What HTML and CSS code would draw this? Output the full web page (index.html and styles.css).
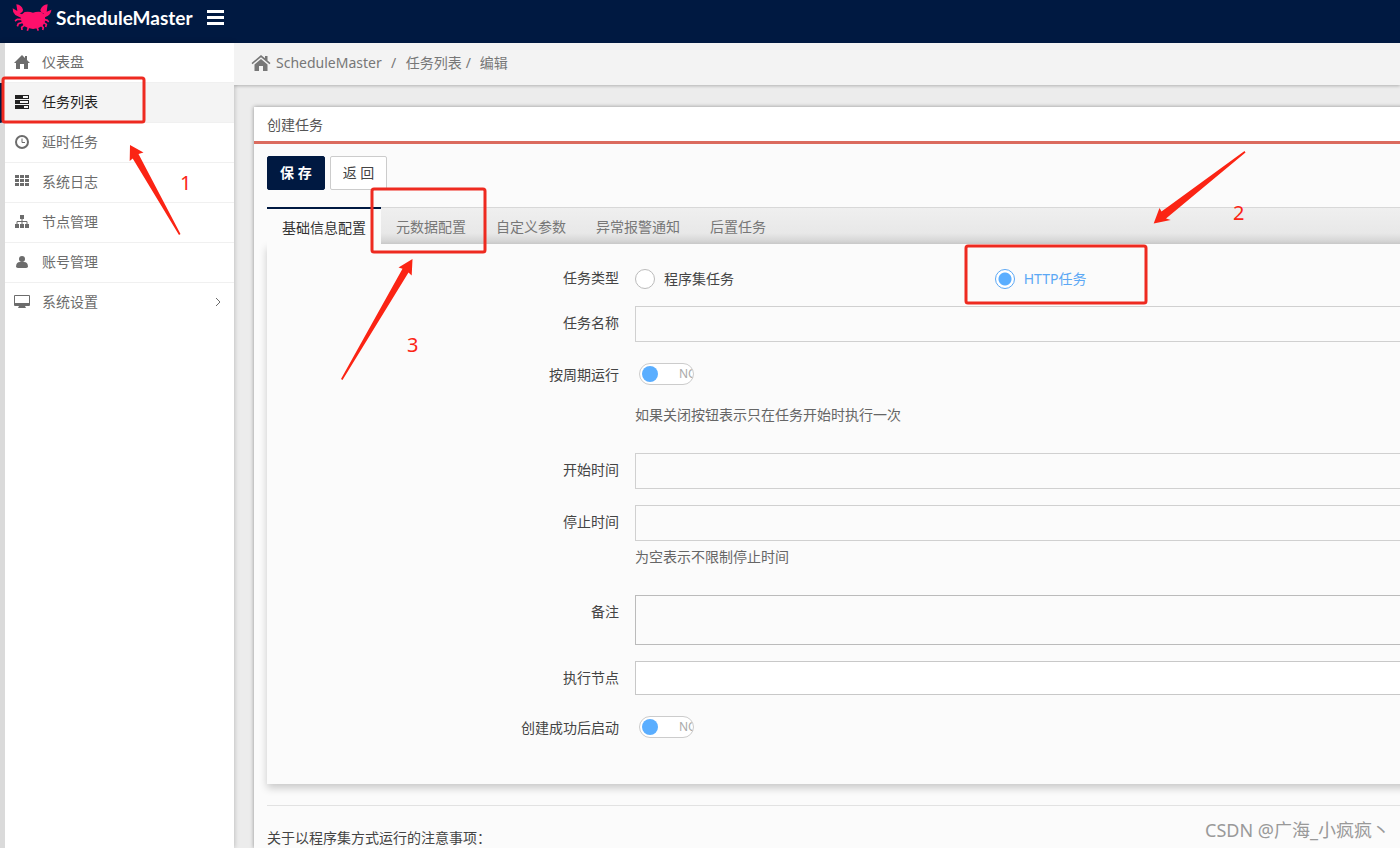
FILE: index.html
```html
<!DOCTYPE html>
<html lang="zh-CN">
<head>
<meta charset="utf-8">
<title>ScheduleMaster</title>
<link rel="stylesheet" href="styles.css">
</head>
<body>
<header class="topbar">
  <a class="brand" href="#">
    <svg class="crab" viewBox="34 6 120 88" aria-hidden="true">
      <path class="crab-fill" d="M62 40L72 32Q84 29 97 34Q110 29 122 32L131 40Q138 58 126 73Q98 92 70 74Q58 58 62 40Z"/>
      <path class="crab-fill" d="M62 50L44 41Q35 32 36 21L50 29L47 9Q63 11 67 25Q67 33 57 36L70 42Z"/>
      <path class="crab-fill" d="M130 49L142 43Q152 36 152 25L138 31L141 9Q124 11 119 26Q120 34 130 37L122 41Z"/>
      <path class="crab-leg" d="M66 54L50 54L43 59M68 62L53 67L50 75M74 70L63 78L64 86M84 76L80 88M128 54L140 57L144 62M126 62L137 69L135 77M120 70L128 79L126 86M108 76L113 88"/>
    </svg>
    <span>ScheduleMaster</span>
  </a>
  <button class="menu-btn" type="button" aria-label="菜单"><i></i><i></i><i></i></button>
</header>
<div class="layout">
  <nav class="sidebar">
    <a href="#"><svg viewBox="0 0 16 16"><path d="M8 1L0 9h2v6h4v-5h4v5h4V9h2l-3-3V2h-2v2z"/></svg><span>仪表盘</span></a>
    <a href="#" class="active"><svg viewBox="0 0 16 16"><path fill-rule="evenodd" d="M1 1h14v4H1zM9 2v2h5V2zM1 6h14v4H1zM6 7v2h8V7zM1 11h14v4H1zM10 12v2h4v-2z"/></svg><span>任务列表</span></a>
    <a href="#"><svg viewBox="0 0 16 16"><path fill="none" stroke="currentColor" stroke-width="2" d="M8 2a6 6 0 1 0 0 12A6 6 0 1 0 8 2z"/><path fill="none" stroke="currentColor" d="M8 4.500V8.500H11"/></svg><span>延时任务</span></a>
    <a href="#"><svg viewBox="0 0 16 16"><path d="M1 1h4v3H1zM6 1h4v3H6zM11 1h4v3h-4zM1 5h4v3H1zM6 5h4v3H6zM11 5h4v3h-4zM1 9h4v3H1zM6 9h4v3H6zM11 9h4v3h-4z"/></svg><span>系统日志</span></a>
    <a href="#"><svg viewBox="0 0 16 16"><path d="M6 1h4v4H6zM1 10h4v4H1zM6 10h4v4H6zM11 10h4v4h-4z"/><path fill="none" stroke="currentColor" d="M8 5v5M3 10V7.500h10V10"/></svg><span>节点管理</span></a>
    <a href="#"><svg viewBox="0 0 16 16"><circle cx="8" cy="5" r="3"/><path d="M2 13q0-5 4-5h4q4 0 4 5-1 1-2 1H4q-1 0-2-1z"/></svg><span>账号管理</span></a>
    <a href="#"><svg viewBox="0 0 16 16"><path fill-rule="evenodd" d="M1 1h14q1 0 1 1v9q0 1-1 1h-4l1 2H4l1-2H1q-1 0-1-1V2q0-1 1-1zm0 1v7h14V2z"/></svg><span>系统设置</span><svg class="caret" viewBox="0 0 8 10"><path d="M2 1l4 4-4 4"/></svg></a>
  </nav>
  <main class="content">
    <nav class="breadcrumb">
      <svg viewBox="0 0 20 18" aria-hidden="true"><path d="M10 5l6.500 5.500V17H12v-5H8v5H3.500v-6.500zM10 1l4 3.300V2h2.500v4.500L19.500 9l-1 1.200L10 3.200 1.500 10.200.500 9z"/></svg>
      <a href="#">ScheduleMaster</a><i>/</i><a href="#">任务列表</a><i class="narrow">/</i><span>编辑</span>
    </nav>
    <section class="card">
      <h1 class="card-title">创建任务</h1>
      <div class="card-body">
        <div class="actions">
          <button class="btn primary" type="button">保 存</button>
          <button class="btn" type="button">返 回</button>
        </div>
        <div class="tabs" role="tablist">
          <button type="button" role="tab" class="selected" aria-selected="true">基础信息配置</button>
          <button type="button" role="tab">元数据配置</button>
          <button type="button" role="tab">自定义参数</button>
          <button type="button" role="tab">异常报警通知</button>
          <button type="button" role="tab">后置任务</button>
        </div>
        <form class="panel">
          <div class="row compact">
            <span class="label">任务类型</span>
            <div class="options">
              <label><input type="radio" name="type">程序集任务</label>
              <label class="on"><input type="radio" name="type" checked>HTTP任务</label>
            </div>
          </div>
          <div class="row">
            <label class="label" for="name">任务名称</label>
            <input class="field" id="name" type="text">
          </div>
          <div class="row spaced">
            <label class="label" for="cycle">按周期运行</label>
            <div class="toggle"><input id="cycle" type="checkbox"><span>NO</span></div>
            <p class="help">如果关闭按钮表示只在任务开始时执行一次</p>
          </div>
          <div class="row">
            <label class="label" for="start">开始时间</label>
            <input class="field" id="start" type="text">
          </div>
          <div class="row spaced">
            <label class="label" for="stop">停止时间</label>
            <input class="field" id="stop" type="text">
            <p class="help">为空表示不限制停止时间</p>
          </div>
          <div class="row">
            <label class="label" for="note">备注</label>
            <textarea class="field" id="note"></textarea>
          </div>
          <div class="row">
            <label class="label" for="node">执行节点</label>
            <select class="field" id="node"></select>
          </div>
          <div class="row">
            <label class="label" for="run">创建成功后启动</label>
            <div class="toggle"><input id="run" type="checkbox"><span>NO</span></div>
          </div>
        </form>
        <p class="notes">关于以程序集方式运行的注意事项：</p>
      </div>
    </section>
  </main>
</div>
<svg class="marks" width="1400" height="848" viewBox="0 0 1400 848">
  <rect x="3" y="78" width="141" height="44" rx="2"/>
  <rect x="372" y="189" width="113" height="63" rx="2"/>
  <rect x="966" y="246" width="180" height="57" rx="2"/>
  <path d="M130 145L143.500 152.500 138.500 154 180.500 234 179 235 132.700 158.500 129.700 161z"/>
  <path d="M412.500 259L398.500 267.500 402.500 268.700 341 379 342.500 380 408.500 272.500 411.700 275.500z"/>
  <path d="M1153.700 223.500L1159.500 208 1161.500 211.500 1244.500 151 1245.500 152.500 1166 218.500 1170.700 220z"/>
  <text x="180" y="190">1</text>
  <text x="1233" y="220">2</text>
  <text x="407" y="352">3</text>
</svg>
<div class="watermark">CSDN @广海_小疯疯丶</div>
</body>
</html>
```
FILE: styles.css
```css
* { box-sizing: border-box; }
body {
  margin: 0;
  position: relative;
  min-height: 100vh;
  overflow: hidden;
  display: flex;
  flex-direction: column;
  background: #ececec;
  color: #444;
  font: 14px/20px "Noto Sans", "Noto Sans CJK SC", sans-serif;
}
a { color: inherit; text-decoration: none; }
button, input, select, textarea { font: inherit; color: inherit; }
p, h1 { margin: 0; }

.topbar {
  height: 43px;
  padding: 0 12px 8px;
  display: flex;
  align-items: center;
  gap: 15px;
  background: #001941;
  color: #fff;
}
.brand {
  display: flex;
  align-items: center;
  gap: 4px;
  font: bold 19px/24px Lato, sans-serif;
}
.crab { width: 40px; height: 30px; }
.crab-fill { fill: #ff0f6b; }
.crab-leg { fill: none; stroke: #ff0f6b; stroke-width: 5; }
.menu-btn {
  display: grid;
  gap: 3px;
  width: 17px;
  padding: 0;
  border: 0;
  background: none;
}
.menu-btn i { height: 3px; background: #fff; }

.layout { flex: 1; display: flex; }
.sidebar {
  width: 234px;
  flex: none;
  padding-left: 5px;
  background: linear-gradient(90deg, #dadada 5px, #fff 5px);
  box-shadow: 0 0 5px rgba(0, 0, 0, .25);
  color: #6c6c6c;
}
.sidebar a {
  height: 40px;
  padding: 0 12px 2px 9px;
  display: flex;
  align-items: center;
  gap: 12px;
  border-bottom: 1px solid #f0f0f0;
}
.sidebar a:last-child { border-bottom: 0; }
.sidebar svg { width: 16px; height: 16px; fill: currentColor; }
.sidebar .active {
  margin-left: -5px;
  padding-left: 10px;
  border-left: 4px solid #001941;
  background: #f4f4f4;
  color: #222;
}
.sidebar .caret {
  width: 8px;
  height: 10px;
  margin-left: auto;
  fill: none;
  stroke: currentColor;
}

.content { flex: 1; min-width: 0; overflow: hidden; display: flex; flex-direction: column; }
.breadcrumb {
  height: 42px;
  padding: 0 17px 2px;
  display: flex;
  align-items: center;
  background: #f3f3f3;
  box-shadow: 0 1px 3px rgba(0, 0, 0, .25);
  color: #777;
}
.breadcrumb svg { width: 20px; height: 18px; margin-right: 5px; fill: #777; }
.breadcrumb i { width: 24px; text-align: center; font-style: normal; }
.breadcrumb .narrow { width: 18px; text-align: left; padding-left: 4px; }

.card {
  flex: 1;
  margin: 22px -30px 0 20px;
  background: #fbfbfb;
  box-shadow: 0 0 4px rgba(0, 0, 0, .4);
}
.card-title {
  height: 37px;
  padding: 8px 13px;
  border-bottom: 3px solid #db6b5e;
  background: #fff;
  font-size: 14px;
  font-weight: normal;
  color: #555;
}
.card-body { padding: 12px 13px 0; }
.actions { display: flex; gap: 5px; }
.btn {
  height: 34px;
  padding: 0 12px;
  border: 1px solid #ccc;
  border-radius: 2px;
  background: #fff;
}
.primary { background: #001941; border-color: #001941; color: #fff; font-weight: bold; }

.tabs {
  height: 37px;
  margin-top: 17px;
  display: flex;
  border-top: 1px solid #d8d8d8;
  background: linear-gradient(#efefef, #e8e8e8 70%, #cfcfcf);
}
.tabs button {
  padding: 2px 15px 0;
  border: 0;
  background: none;
  color: #777;
}
.tabs .selected {
  margin-top: -1px;
  border-top: 2px solid #001941;
  background: #fbfbfb;
  color: #333;
}
.panel {
  padding: 22px 0 46px;
  display: flex;
  flex-direction: column;
  background: #fbfbfb;
  box-shadow: 0 4px 8px rgba(0, 0, 0, .2);
}
.row {
  display: grid;
  grid-template-columns: 368px 1fr;
  margin-bottom: 16px;
  align-items: start;
}
.row:last-child { margin-bottom: 0; }
.row.compact { margin-bottom: 14px; }
.row.spaced { margin-bottom: 28px; }
.label { text-align: right; padding: 7px 16px 0 0; }
.compact .label { padding-top: 2px; }
.field {
  width: 100%;
  height: 36px;
  padding: 6px 12px;
  border: 1px solid #d0d0d0;
  border-radius: 0;
  background: transparent;
  resize: none;
  display: block;
}
textarea.field { height: 50px; border-color: #bbb; }
select.field { height: 34px; background: #fff; border-color: #c8c8c8; appearance: none; }
.help { grid-column: 2; margin-top: 6px; color: #666; }
.toggle + .help { margin-top: 20px; }

.options { display: grid; grid-template-columns: 46% 1fr; }
.options label { display: flex; align-items: center; gap: 9px; height: 26px; }
.options .on { color: #5ba8f5; }
.options input {
  appearance: none;
  width: 20px;
  height: 20px;
  margin: 0;
  border: 1px solid #bbb;
  border-radius: 50%;
  background: #fff;
}
.options input:checked {
  border-color: #5ba8f5;
  background: radial-gradient(circle, #5aaeff 6px, #fff 7px);
}
.toggle {
  width: 55px;
  height: 22px;
  margin: 5px 0 0 4px;
  padding: 0 0 0 2px;
  display: flex;
  align-items: center;
  gap: 21px;
  overflow: hidden;
  border: 1px solid #ccc;
  border-radius: 11px;
  background: #fff;
  color: #aaa;
  font-size: 12px;
}
.toggle input {
  appearance: none;
  flex: none;
  width: 16px;
  height: 16px;
  margin: 0;
  border-radius: 50%;
  background: #5aaeff;
}
.notes { margin-top: 21px; padding-top: 22px; border-top: 1px solid #e2e2e2; }

.marks { position: absolute; left: 0; top: 0; pointer-events: none; fill: #fb2414; }
.marks rect { fill: none; stroke: #ee2a20; stroke-width: 3; }
.marks text { font-size: 20px; }
.watermark {
  position: absolute;
  right: 10px;
  bottom: 6px;
  color: #999;
  font-size: 18px;
  line-height: 24px;
}
```
